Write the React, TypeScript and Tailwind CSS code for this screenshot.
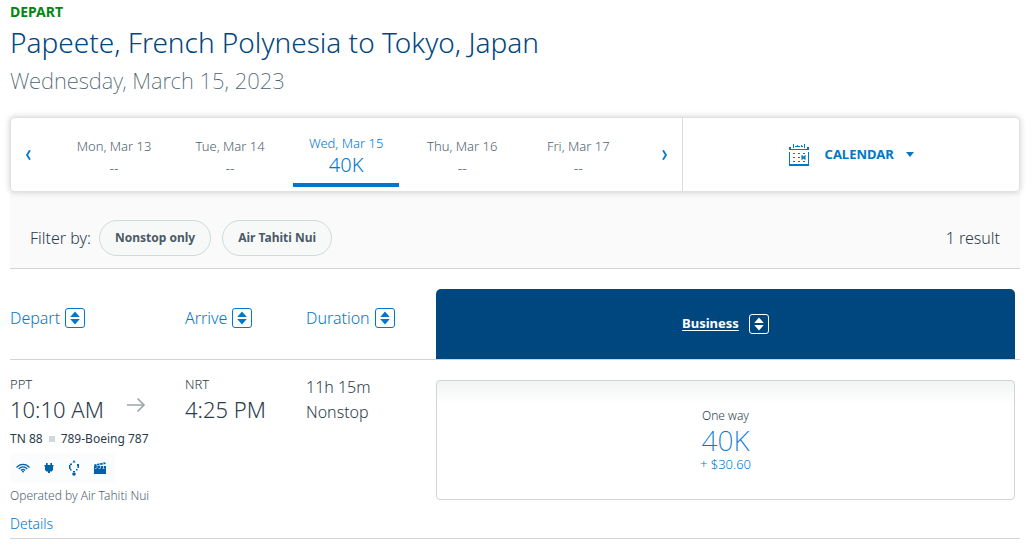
import { useState } from "react";

type FareDate = { id: string; label: string; miles: string };

const dates: FareDate[] = [
  { id: "13", label: "Mon, Mar 13", miles: "--" },
  { id: "14", label: "Tue, Mar 14", miles: "--" },
  { id: "15", label: "Wed, Mar 15", miles: "40K" },
  { id: "16", label: "Thu, Mar 16", miles: "--" },
  { id: "17", label: "Fri, Mar 17", miles: "--" },
];

const filters = ["Nonstop only", "Air Tahiti Nui"];

function ChevronIcon({ flip = false }: { flip?: boolean }) {
  return (
    <svg width="6" height="10" viewBox="0 0 6 10" className={flip ? "rotate-180" : ""} aria-hidden="true">
      <path d="M5 .3 2 5l3 4.700" fill="none" stroke="currentColor" strokeWidth="1.800" />
    </svg>
  );
}

function CalendarIcon() {
  return (
    <svg width="20" height="22" viewBox="0 0 20 22" fill="currentColor" aria-hidden="true">
      <path d="M0 3h2v3H0zM18 3h2v3h-2zM6 2h2v1H6zM12 2h2v1h-2zM9 2h2v1H9zM0 5h20v1H0z" />
      <path d="M4 0h1v4H4zM8 1h1v2H8zM12 1h1v2h-1zM15 0h1v4h-1z" />
      <path d="M0 8h1v12h18V8h1v14H0z" />
      <path d="M4 9h2v1H4zM9 9h2v1H9zM14 9h2v1h-2zM4 13h2v1H4zM9 13h2v1H9zM4 17h2v1H4zM9 17h2v1H9zM14 17h2v1h-2z" />
      <path d="m12.500 11.500 4 4m0-4-4 4M12.500 13.500h4" stroke="currentColor" strokeWidth="1.300" />
    </svg>
  );
}

function SortIcon() {
  return (
    <svg width="20" height="20" viewBox="0 0 20 20" className="shrink-0" aria-hidden="true">
      <rect x=".5" y=".5" width="19" height="19" rx="2.500" fill="none" stroke="currentColor" />
      <path d="M10 3.500 14.800 9H5.200zM10 16.500 5.200 11h9.600z" fill="currentColor" />
    </svg>
  );
}

function ArrowIcon() {
  return (
    <svg width="20" height="16" viewBox="0 0 20 16" className="text-[#9da6ab]" aria-hidden="true">
      <path d="M1 8h17.500M11.500 1.500 18 8l-6.500 6.500" fill="none" stroke="currentColor" strokeWidth="1.700" />
    </svg>
  );
}

function WifiIcon() {
  return (
    <svg width="14" height="10" viewBox="0 0 14 10" aria-label="Wi-Fi" role="img">
      <path
        d="M.5 4.500C4 .3 10 .3 13.500 4.500M2.700 6c2.400-2.800 6.200-2.800 8.600 0M4.900 7.500c1.200-1.400 3-1.400 4.200 0"
        fill="none"
        stroke="currentColor"
        strokeWidth="1.200"
      />
      <circle cx="7" cy="8.600" r="1" fill="currentColor" />
    </svg>
  );
}

function PlugIcon() {
  return (
    <svg width="10" height="12" viewBox="0 0 10 12" fill="currentColor" aria-label="Power" role="img">
      <path d="M2 1h1.700v2H2zM6.300 1H8v2H6.300zM.5 3h9v1.500H9V8L7.500 9.500H6V11H4V9.500H2.500L1 8V4.500H.5z" />
    </svg>
  );
}

function UsbIcon() {
  return (
    <svg width="12" height="16" viewBox="0 0 12 16" fill="currentColor" aria-label="USB" role="img">
      <path d="M6 0 7.500 2.500h-3zM9 4h2v4H9.500V6H9zM8 9h1.500v1.500H8zM5 11h2v1H5z" />
      <circle cx="6" cy="14" r="1.800" />
      <path d="M2 3.500h2V5H2zM1 5h1.500v4H1zM2 9h1.500v1.500H2z" />
    </svg>
  );
}

function MovieIcon() {
  return (
    <svg width="12" height="12" viewBox="0 0 12 12" fill="currentColor" aria-label="Movies" role="img">
      <path d="M0 4h12v8H0zM0 2.500 11.200.3l.5 1.700L.6 4.200z" />
      <path d="m2.500 2.200.8 1.600M5.500 1.500l.8 2M8.800.8l.8 2.400M3 4.500v1.300M6.500 4.200v1.600M9.500 4v1.800" stroke="#fff" strokeWidth=".8" />
      <path d="M1 6.500h1.500M4.500 6.500h2M8.500 6.500h2" stroke="#fff" strokeWidth=".6" />
    </svg>
  );
}

function SortButton({ label }: { label: string }) {
  return (
    <button type="button" className="flex items-center gap-[5px] text-base leading-5 font-light text-[#0078d2]">
      {label}
      <SortIcon />
    </button>
  );
}

export default function App() {
  const [selected, setSelected] = useState("15");
  const [active, setActive] = useState<string[]>([]);

  const toggle = (name: string) =>
    setActive((prev) => (prev.includes(name) ? prev.filter((f) => f !== name) : [...prev, name]));

  return (
    <main className="bg-white px-[10px] font-['Noto_Sans','Open_Sans',sans-serif] font-light text-[#2b3c4b]">
      <header className="pt-[2px] pb-5">
        <p className="text-sm leading-5 font-bold text-[#008712]">DEPART</p>
        <h1 className="text-[28px] leading-[41px] font-light text-[#00467f]">
          Papeete, French Polynesia to Tokyo, Japan
        </h1>
        <p className="text-[22px] leading-[34px] font-extralight text-[#4c6370]">Wednesday, March 15, 2023</p>
      </header>

      {/* Date strip */}
      <section className="relative flex rounded-[4px] border border-[#e0e1e3] bg-white shadow-[0_0_6px_rgba(0,0,0,0.2)]">
        <div className="flex h-[73px] flex-2 border-r border-[#d8dbde] text-[#0078d2]">
          <button type="button" aria-label="Previous dates" className="flex w-[45px] items-center justify-center pr-3">
            <ChevronIcon />
          </button>
          {dates.map((d) => {
            const on = d.id === selected;
            return (
              <button
                key={d.id}
                type="button"
                aria-pressed={on}
                onClick={() => setSelected(d.id)}
                className={
                  on
                    ? "mx-[5px] mb-1 flex flex-1 flex-col items-center border-b-4 border-[#0078c8] pt-[15px] text-[13px] leading-5 text-[#0078d2]"
                    : "mx-[5px] mb-1 flex flex-1 flex-col items-center pt-[18px] text-[13px] leading-5 text-[#4c6370]"
                }
              >
                {d.label}
                <span className={on ? "text-xl leading-6" : "text-sm leading-6"}>{d.miles}</span>
              </button>
            );
          })}
          <button type="button" aria-label="Next dates" className="flex w-[46px] items-center justify-center pl-3">
            <ChevronIcon flip />
          </button>
        </div>
        <button
          type="button"
          className="flex flex-1 items-center justify-center text-[13px] font-bold text-[#0078c8]"
        >
          <CalendarIcon />
          <span className="ml-4">CALENDAR</span>
          <svg width="8" height="5" viewBox="0 0 8 5" className="ml-3" aria-hidden="true">
            <path d="M0 0h8L4 5z" fill="currentColor" />
          </svg>
        </button>
      </section>

      {/* Filters */}
      <section className="flex h-[77px] items-center border-b border-[#d0d4d7] bg-[#fafafa] px-5 pt-4">
        <span className="mr-2 text-base leading-5">Filter by:</span>
        <div className="flex gap-[11px]">
          {filters.map((name) => (
            <button
              key={name}
              type="button"
              aria-pressed={active.includes(name)}
              onClick={() => toggle(name)}
              className="h-9 rounded-full border border-[#d0dad9] bg-[#f7f9f9] px-[15px] text-xs font-bold text-[#4b5a66]"
            >
              {name}
            </button>
          ))}
        </div>
        <span className="ml-auto text-base leading-5">1 result</span>
      </section>

      {/* Results */}
      <table className="w-full table-fixed border-collapse text-left">
        <colgroup>
          <col className="w-[175px]" />
          <col className="w-[121px]" />
          <col className="w-[130px]" />
          <col />
        </colgroup>
        <thead>
          <tr className="h-[90px] border-b border-[#d0d4d7]">
            <th className="pt-2 font-light">
              <SortButton label="Depart" />
            </th>
            <th className="pt-2 font-light">
              <SortButton label="Arrive" />
            </th>
            <th className="pt-2 font-light">
              <SortButton label="Duration" />
            </th>
            <th className="pt-5 pr-[5px] align-bottom font-light">
              <div className="flex h-[70px] items-center justify-center gap-[10px] rounded-t-[5px] bg-[#00467f] text-white">
                <a href="#business" className="text-[13px] font-bold underline underline-offset-2">
                  Business
                </a>
                <button type="button" aria-label="Sort by Business">
                  <SortIcon />
                </button>
              </div>
            </th>
          </tr>
        </thead>
        <tbody>
          <tr className="h-[179px] border-b border-[#d0d4d7] align-top">
            <td className="pt-[14px]">
              <div className="flex items-center">
                <div>
                  <p className="text-[13px] leading-5">PPT</p>
                  <p className="text-[22px] leading-[30px]">10:10 AM</p>
                </div>
                <div className="ml-[22px] self-end pb-[11px]">
                  <ArrowIcon />
                </div>
              </div>
              <p className="flex items-center gap-[6px] text-xs leading-[30px] font-normal">
                TN 88
                <span className="size-[6px] bg-[#d0dad9]" />
                789-Boeing 787
              </p>
              <div className="flex h-7 w-[105px] items-center gap-[14px] bg-[#fbfcfd] px-[6px] text-[#0061ab]">
                <WifiIcon />
                <PlugIcon />
                <UsbIcon />
                <MovieIcon />
              </div>
              <p className="text-xs leading-7 text-[#4c6370]">Operated by Air Tahiti Nui</p>
              <a href="#details" className="block text-sm leading-7 text-[#0078d2]">
                Details
              </a>
            </td>
            <td className="pt-[14px]">
              <p className="text-[13px] leading-5">NRT</p>
              <p className="text-[22px] leading-[30px]">4:25 PM</p>
            </td>
            <td className="pt-[15px] text-base leading-[25px]">
              <p>11h 15m</p>
              <p>Nonstop</p>
            </td>
            <td className="pt-5 pr-[5px]">
              <button
                type="button"
                className="flex h-[120px] w-full flex-col items-center justify-center rounded-[4px] border border-[#d0d4d7] bg-linear-to-b from-[#f2f4f4] to-white to-20% text-[#0078d2]"
              >
                <span className="text-xs leading-4 text-[#2b3c4b]">One way</span>
                <span className="text-[28px] leading-8 font-extralight">40K</span>
                <span className="text-[13px] leading-4">+ $30.60</span>
              </button>
            </td>
          </tr>
        </tbody>
      </table>
    </main>
  );
}
